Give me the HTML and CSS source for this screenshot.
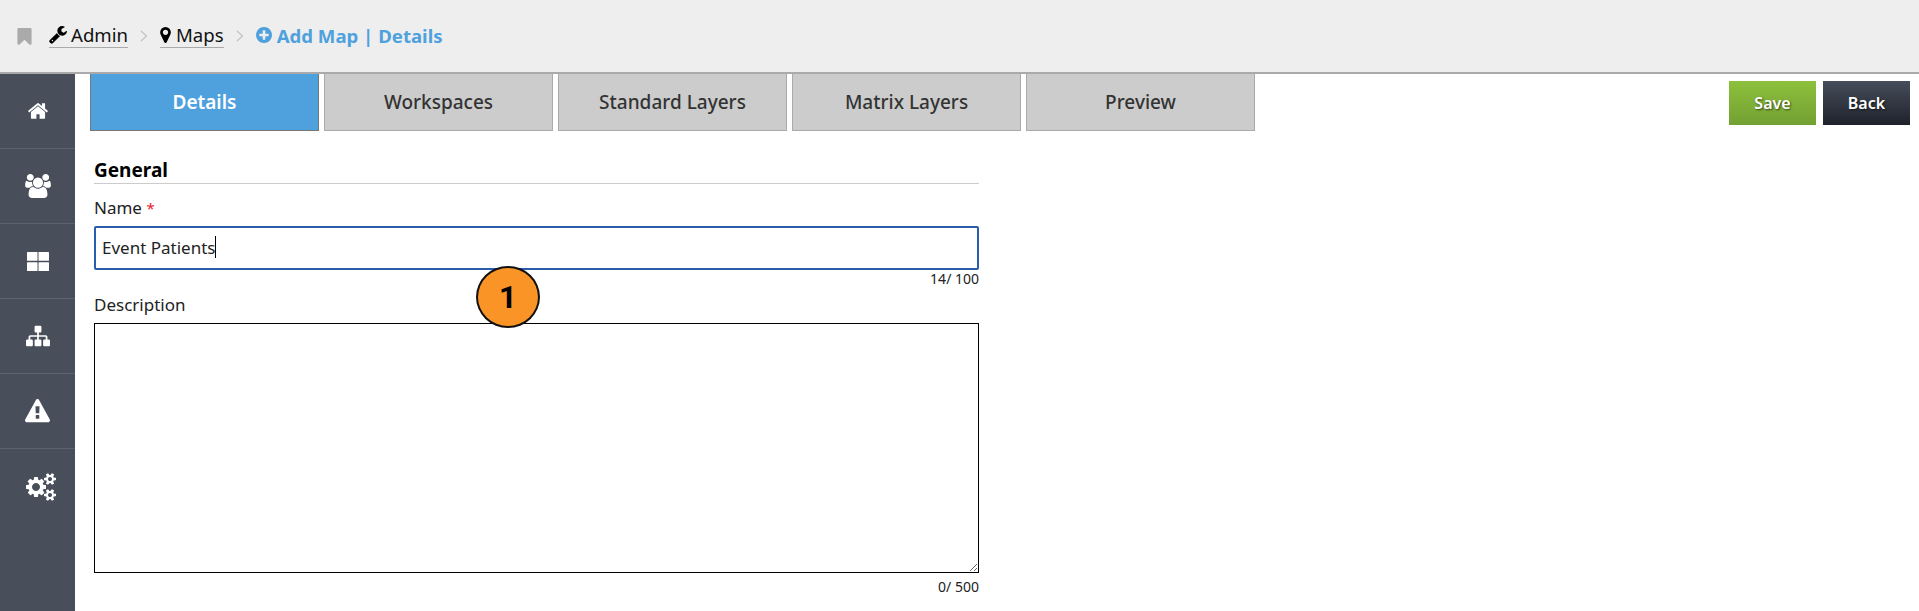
FILE: index.html
```html
<!DOCTYPE html>
<html lang="en">
<head>
    <meta charset="UTF-8">
    <meta name="viewport" content="width=device-width, initial-scale=1.0">
    <title>Add Map | Details</title>
    <link rel="stylesheet" href="styles.css">
</head>
<body>

    <!-- Breadcrumb bar -->
    <header class="topbar">
        <svg class="icon-bookmark" viewBox="256 128 1280 1536"><path d="M1420 128q23 0 44 9 33 13 52.500 41t19.500 62v1289q0 34-19.500 62t-52.500 41q-19 8-44 8-48 0-83-32l-441-424-441 424q-36 33-83 33-23 0-44-9-33-13-52.500-41t-19.500-62v-1289q0-34 19.500-62t52.500-41q21-9 44-9h1048z"/></svg>
        <a class="crumb" href="#">
            <svg class="crumb-icon wrench" viewBox="64 128 1664 1664"><path d="M448 1472q0-26-19-45t-45-19-45 19-19 45 19 45 45 19 45-19 19-45zm644-420l-682 682q-37 37-90 37-52 0-91-37l-106-108q-38-36-38-90 0-53 38-91l681-681q39 98 114.500 173.500t173.500 114.500zm634-435q0 39-23 106-47 134-164.500 217.500t-258.500 83.500q-185 0-316.500-131.500t-131.500-316.500 131.500-316.500 316.500-131.500q58 0 121.500 16.500t107.500 46.500q16 11 16 28t-16 28l-293 169v224l193 107q5-3 79-48.500t135.500-81 70.500-35.500q15 0 23.500 10t8.500 25z"/></svg>
            Admin
        </a>
        <svg class="chevron" viewBox="0 0 8 12"><polyline points="1,1 6.500,6 1,11"/></svg>
        <a class="crumb crumb-maps" href="#">
            <svg class="crumb-icon marker" viewBox="384 128 1024 1536"><path d="M1152 640q0-106-75-181t-181-75-181 75-75 181 75 181 181 75 181-75 75-181zm256 0q0 109-33 179l-364 774q-16 33-47.500 52t-67.500 19-67.500-19-46.500-52l-365-774q-33-70-33-179 0-212 150-362t362-150 362 150 150 362z"/></svg>
            Maps
        </a>
        <svg class="chevron" viewBox="0 0 8 12"><polyline points="1,1 6.500,6 1,11"/></svg>
        <span class="crumb-current">
            <svg class="crumb-icon plus" viewBox="128 128 1536 1536"><path d="M1344 960v-128q0-26-19-45t-45-19h-256v-256q0-26-19-45t-45-19h-128q-26 0-45 19t-19 45v256h-256q-26 0-45 19t-19 45v128q0 26 19 45t45 19h256v256q0 26 19 45t45 19h128q26 0 45-19t19-45v-256h256q26 0 45-19t19-45zm320-64q0 209-103 385.500t-279.500 279.500-385.500 103-385.500-103-279.500-279.500-103-385.500 103-385.500 279.500-279.500 385.500-103 385.500 103 279.500 279.500 103 385.500z"/></svg>
            Add Map | Details
        </span>
    </header>

    <div class="layout">

        <!-- Left navigation -->
        <nav class="sidebar">
            <a class="nav-item" href="#"><svg class="nav-home" viewBox="0 0 1792 1792"><path d="M1472 992v480q0 26-19 45t-45 19h-384v-384h-256v384h-384q-26 0-45-19t-19-45v-480q0-1 .5-3t.5-3l575-474 575 474q1 2 1 6zm223-69l-62 74q-8 9-21 11h-3q-13 0-21-7l-692-577-692 577q-12 8-24 7-13-2-21-11l-62-74q-8-10-7-23.500t11-21.500l719-599q32-26 76-26t76 26l244 204v-195q0-14 9-23t23-9h192q14 0 23 9t9 23v408l219 182q10 8 11 21.500t-7 23.500z"/></svg></a>
            <a class="nav-item" href="#"><svg class="nav-users" viewBox="0 0 1920 1792"><path d="M593 896q-162 5-265 128h-134q-82 0-138-40.500t-56-118.500q0-353 124-353 6 0 43.500 21t97.500 42.500 119 21.500q67 0 133-23-5 37-5 66 0 139 81 256zm1071 637q0 120-73 189.500t-194 69.500h-874q-121 0-194-69.500t-73-189.500q0-53 3.500-103.500t14-109 26.500-108.500 43-97.500 62-81 85.500-53.500 111.500-20q10 0 43 21.500t73 48 107 48 135 21.500 135-21.500 107-48 73-48 43-21.500q61 0 111.500 20t85.500 53.500 62 81 43 97.500 26.500 108.500 14 109 3.500 103.500zm-1024-1277q0 106-75 181t-181 75-181-75-75-181 75-181 181-75 181 75 75 181zm704 384q0 159-112.500 271.500t-271.500 112.500-271.500-112.500-112.500-271.500 112.500-271.500 271.500-112.500 271.500 112.500 112.500 271.500zm576 225q0 78-56 118.500t-138 40.500h-134q-103-123-265-128 81-117 81-256 0-29-5-66 66 23 133 23 59 0 119-21.500t97.500-42.500 43.500-21q124 0 124 353zm-128-609q0 106-75 181t-181 75-181-75-75-181 75-181 181-75 181 75 75 181z"/></svg></a>
            <a class="nav-item" href="#"><svg class="nav-grid" viewBox="0 0 22 19"><rect width="10.500" height="8.750" rx=".5"/><rect x="11.500" width="10.500" height="8.750" rx=".5"/><rect y="10.250" width="10.500" height="8.750" rx=".5"/><rect x="11.500" y="10.250" width="10.500" height="8.750" rx=".5"/></svg></a>
            <a class="nav-item" href="#"><svg class="nav-sitemap" viewBox="0 0 1792 1792"><path d="M1792 1248v320q0 40-28 68t-68 28h-320q-40 0-68-28t-28-68v-320q0-40 28-68t68-28h96v-192h-512v192h96q40 0 68 28t28 68v320q0 40-28 68t-68 28h-320q-40 0-68-28t-28-68v-320q0-40 28-68t68-28h96v-192h-512v192h96q40 0 68 28t28 68v320q0 40-28 68t-68 28h-320q-40 0-68-28t-28-68v-320q0-40 28-68t68-28h96v-192q0-52 38-90t90-38h512v-192h-96q-40 0-68-28t-28-68v-320q0-40 28-68t68-28h320q40 0 68 28t28 68v320q0 40-28 68t-68 28h-96v192h512q52 0 90 38t38 90v192h96q40 0 68 28t28 68z"/></svg></a>
            <a class="nav-item" href="#"><svg class="nav-warning" viewBox="0 0 1792 1792"><path d="M1024 1375v-190q0-14-9.500-23.500t-22.500-9.500h-192q-13 0-22.500 9.500t-9.500 23.500v190q0 14 9.500 23.500t22.500 9.500h192q13 0 22.500-9.500t9.500-23.500zm-2-374l18-459q0-12-10-19-13-11-24-11h-220q-11 0-24 11-10 7-10 21l17 457q0 10 10 16.500t24 6.500h185q14 0 23.500-6.500t10.500-16.500zm-14-934l768 1408q35 63-2 126-17 29-46.500 46t-63.500 17h-1536q-34 0-63.500-17t-46.500-46q-37-63-2-126l768-1408q17-31 47-49t65-18 65 18 47 49z"/></svg></a>
            <a class="nav-item" href="#"><svg class="nav-cogs" viewBox="0 0 1920 1792"><path d="M896 896q0-106-75-181t-181-75-181 75-75 181 75 181 181 75 181-75 75-181zm768 512q0-52-38-90t-90-38-90 38-38 90q0 53 37.500 90.500t90.500 37.500 90.500-37.500 37.500-90.500zm0-1024q0-52-38-90t-90-38-90 38-38 90q0 53 37.500 90.500t90.500 37.500 90.500-37.500 37.500-90.500zm-384 421v185q0 10-7 19.500t-16 10.500l-155 24q-11 35-32 76 34 48 90 115 7 11 7 20 0 12-7 19-23 30-82.500 89.500t-78.500 59.500q-11 0-21-7l-115-90q-37 19-77 31-11 108-23 155-7 24-30 24h-186q-11 0-20-7.500t-10-17.500l-23-153q-34-10-75-31l-118 89q-7 7-20 7-11 0-21-8-144-133-144-160 0-9 7-19 10-14 41-53t47-61q-23-44-35-82l-152-24q-10-1-17-9.500t-7-19.500v-185q0-10 7-19.500t16-10.500l155-24q11-35 32-76-34-48-90-115-7-11-7-20 0-12 7-20 22-30 82-89t79-59q11 0 21 7l115 90q34-18 77-32 11-108 23-154 7-24 30-24h186q11 0 20 7.500t10 17.500l23 153q34 10 75 31l118-89q8-7 20-7 11 0 21 8 144 133 144 160 0 8-7 19-12 16-42 54t-45 60q23 48 34 82l152 23q10 2 17 10.500t7 19.500zm640 533v140q0 16-149 31-12 27-30 52 51 113 51 138 0 4-4 7-122 71-124 71-8 0-46-47t-52-68q-20 2-30 2t-30-2q-14 21-52 68t-46 47q-2 0-124-71-4-3-4-7 0-25 51-138-18-25-30-52-149-15-149-31v-140q0-16 149-31 13-29 30-52-51-113-51-138 0-4 4-7 4-2 35-20t59-34 30-16q8 0 46 46.500t52 67.500q20-2 30-2t30 2q51-71 92-112l6-2q4 0 124 70 4 3 4 7 0 25-51 138 17 23 30 52 149 15 149 31zm0-1024v140q0 16-149 31-12 27-30 52 51 113 51 138 0 4-4 7-122 71-124 71-8 0-46-47t-52-68q-20 2-30 2t-30-2q-14 21-52 68t-46 47q-2 0-124-71-4-3-4-7 0-25 51-138-18-25-30-52-149-15-149-31v-140q0-16 149-31 13-29 30-52-51-113-51-138 0-4 4-7 4-2 35-20t59-34 30-16q8 0 46 46.500t52 67.500q20-2 30-2t30 2q51-71 92-112l6-2q4 0 124 70 4 3 4 7 0 25-51 138 17 23 30 52 149 15 149 31z"/></svg></a>
        </nav>

        <main class="content">

            <!-- Tabs and action buttons -->
            <div class="toolbar">
                <div class="tabs">
                    <a class="tab active" href="#">Details</a>
                    <a class="tab" href="#">Workspaces</a>
                    <a class="tab" href="#">Standard Layers</a>
                    <a class="tab" href="#">Matrix Layers</a>
                    <a class="tab" href="#">Preview</a>
                </div>
                <div class="actions">
                    <button class="btn btn-save">Save</button>
                    <button class="btn btn-back">Back</button>
                </div>
            </div>

            <!-- Map details form -->
            <form class="details-form">
                <h2 class="section-title">General</h2>

                <label class="field-label">Name <span class="required">*</span></label>
                <div class="name-box">Event Patients<span class="caret"></span></div>
                <div class="counter">14/ 100</div>

                <label class="field-label desc-label" for="description">Description</label>
                <textarea class="desc-box" id="description"></textarea>
                <div class="counter counter-desc">0/ 500</div>

                <div class="callout">1</div>
            </form>
        </main>
    </div>

</body>
</html>
```

FILE: styles.css
```css
* {
    box-sizing: border-box;
}
html, body {
    height: 100%;
}
body {
    margin: 0;
    overflow: hidden;
    font-family: "Noto Sans", "Open Sans", sans-serif;
    color: #111;
    background-color: #fff;
}
a {
    text-decoration: none;
    color: inherit;
}

/* Breadcrumb bar */
.topbar {
    height: 74px;
    display: flex;
    align-items: center;
    padding-left: 17px;
    background-color: #eee;
    border-bottom: 2px solid #aaa;
    font-size: 18.6px;
}
.icon-bookmark {
    width: 15px;
    height: 17px;
    margin-right: 17px;
    fill: #aaa;
}
.crumb {
    display: flex;
    align-items: center;
    gap: 4px;
    height: 24px;
    padding-bottom: 2px;
    border-bottom: 1px solid #aaa;
    color: #111;
}
.crumb-maps {
    gap: 5px;
}
.crumb-icon {
    fill: #000;
}
.wrench {
    width: 18px;
    height: 18px;
}
.marker {
    width: 11px;
    height: 16px;
}
.chevron {
    width: 8px;
    height: 12px;
    margin: 0 12px;
    fill: none;
    stroke: #c4c4c4;
    stroke-width: 1.3;
}
.crumb-current {
    display: flex;
    align-items: center;
    gap: 5px;
    margin-top: -2px;
    font-weight: 700;
    color: #4fa1de;
}
.plus {
    width: 16px;
    height: 16px;
    fill: #4fa1de;
}

.layout {
    display: flex;
    height: calc(100% - 74px);
}

/* Left navigation */
.sidebar {
    width: 75px;
    flex-shrink: 0;
    background-color: #484f5b;
}
.nav-item {
    height: 75px;
    display: flex;
    align-items: center;
    justify-content: center;
    border-bottom: 1px solid #5c636e;
}
.nav-item:last-child {
    border-bottom: none;
}
.nav-item svg {
    fill: #fff;
}
.nav-home {
    width: 22px;
    height: 22px;
}
.nav-users {
    width: 26px;
    height: 24px;
}
.nav-grid {
    width: 22px;
    height: 19px;
}
.nav-sitemap {
    width: 24px;
    height: 24px;
}
.nav-warning {
    width: 25px;
    height: 25px;
}
.nav-cogs {
    width: 30px;
    height: 28px;
    margin-left: 7px;
}

.content {
    flex: 1;
    padding: 0 9px 0 15px;
}

/* Tabs */
.toolbar {
    display: flex;
    justify-content: space-between;
}
.tabs {
    display: flex;
    gap: 5px;
}
.tab {
    width: 229px;
    height: 57px;
    display: flex;
    align-items: center;
    justify-content: center;
    background-color: #ccc;
    border: 1px solid #aaa;
    border-top: none;
    font-size: 19px;
    font-weight: 500;
    color: #333;
}
.tab.active {
    background-color: #4fa1de;
    border: 1px solid #777;
    border-top: none;
    font-weight: 600;
    color: #fff;
}
.actions {
    display: flex;
    gap: 7px;
    padding-top: 7px;
}
.btn {
    width: 87px;
    height: 44px;
    border: none;
    color: #fff;
    font-family: "Noto Sans", "Open Sans", sans-serif;
    font-size: 16px;
    font-weight: 600;
    text-shadow: 1px 1px 2px rgba(0, 0, 0, 0.6);
}
.btn-save {
    background: linear-gradient(#8dc03c, #73a033);
}
.btn-back {
    background: linear-gradient(#464d5a, #1f222b);
}

/* Form */
.details-form {
    position: relative;
    width: 885px;
    margin: 0 0 0 4px;
    padding-top: 26px;
}
.section-title {
    margin: 0;
    height: 27px;
    border-bottom: 1px solid #ccc;
    font-size: 19px;
    line-height: 26px;
    font-weight: 700;
    color: #000;
}
.field-label {
    display: block;
    margin-top: 12px;
    font-size: 17px;
    line-height: 24px;
    color: #222;
}
.required {
    font-size: 15px;
    color: #e8192c;
}
.name-box {
    height: 44px;
    margin-top: 6px;
    padding: 0 0 2px 6px;
    display: flex;
    align-items: center;
    border: 2px solid #2a5daa;
    border-radius: 2px;
    font-size: 17px;
    color: #222;
}
.caret {
    width: 1px;
    height: 22px;
    background-color: #000;
}
.counter {
    height: 16px;
    margin-top: 1px;
    text-align: right;
    font-size: 14px;
    line-height: 16px;
    color: #222;
}
.desc-label {
    margin-top: 6px;
}
.desc-box {
    display: block;
    width: 100%;
    height: 250px;
    margin-top: 6px;
    border: 1px solid #000;
    border-radius: 0;
    outline: none;
}
.counter-desc {
    margin-top: 6px;
}

/* Numbered marker over the form */
.callout {
    position: absolute;
    left: 382px;
    top: 135px;
    width: 64px;
    height: 62px;
    display: flex;
    align-items: center;
    justify-content: center;
    background-color: #fb9426;
    border: 2px solid #111;
    border-radius: 50%;
    font-family: Roboto, sans-serif;
    font-size: 31px;
    font-weight: 700;
    color: #000;
}
```
